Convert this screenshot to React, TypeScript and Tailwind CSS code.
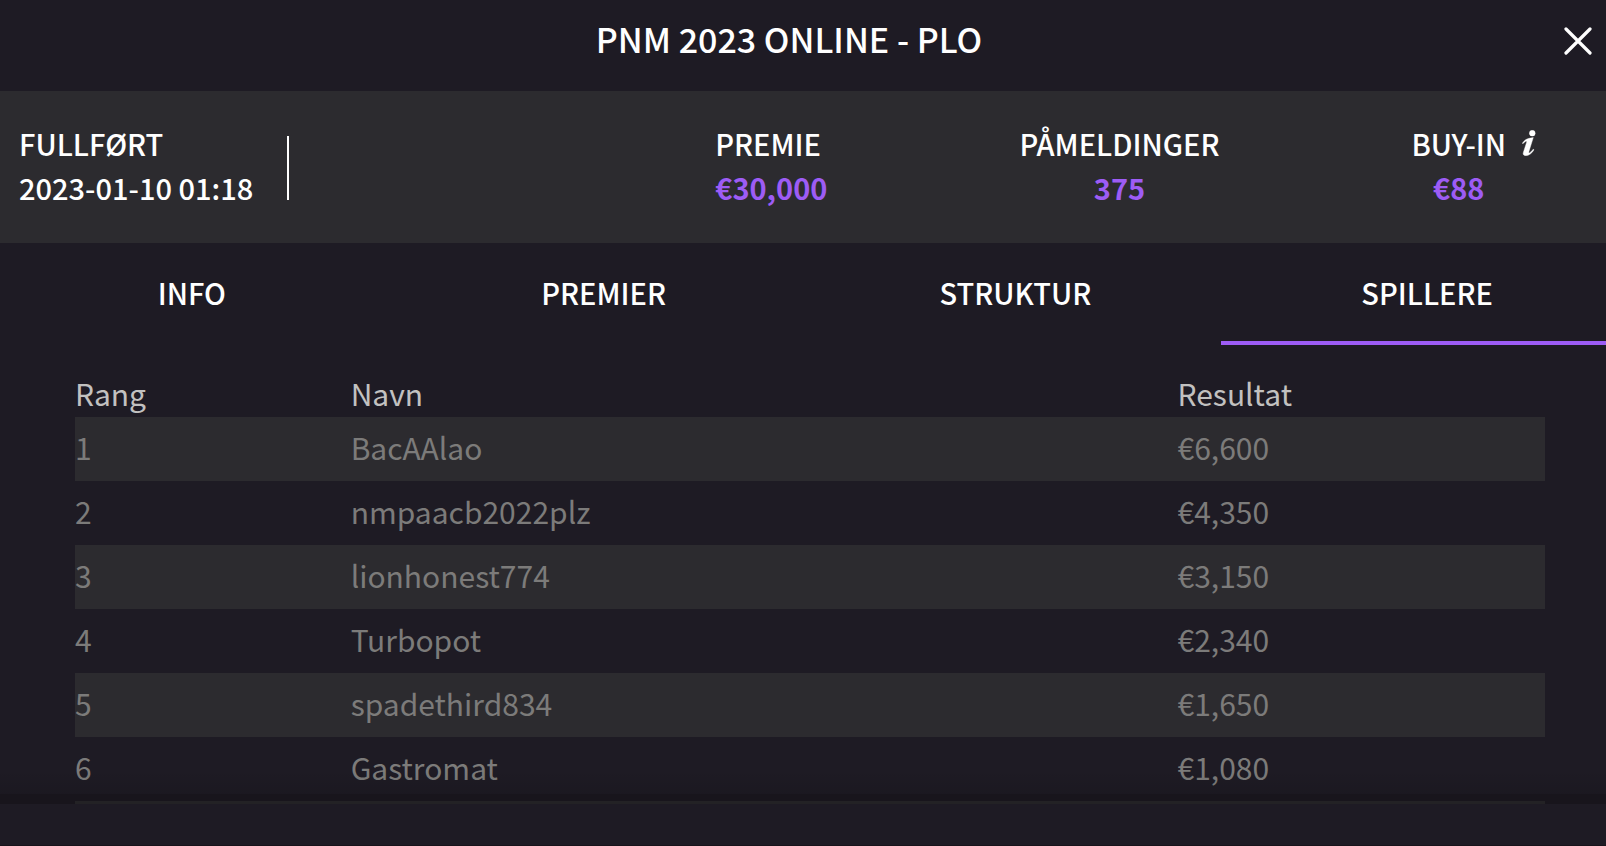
import { useState } from 'react';

const tabs = ['INFO', 'PREMIER', 'STRUKTUR', 'SPILLERE'];

const players = [
  { rank: 1, name: 'BacAAlao', result: '€6,600' },
  { rank: 2, name: 'nmpaacb2022plz', result: '€4,350' },
  { rank: 3, name: 'lionhonest774', result: '€3,150' },
  { rank: 4, name: 'Turbopot', result: '€2,340' },
  { rank: 5, name: 'spadethird834', result: '€1,650' },
  { rank: 6, name: 'Gastromat', result: '€1,080' },
];

function CloseIcon() {
  return (
    <svg width="28" height="28" viewBox="0 0 28 28" fill="none" stroke="currentColor" strokeWidth="3.2" strokeLinecap="round" aria-hidden="true">
      <path d="M2 2l24 24M26 2L2 26" />
    </svg>
  );
}

function InfoIcon() {
  return (
    <svg width="14" height="26" viewBox="0 0 14 26" fill="currentColor" stroke="currentColor" strokeWidth="0.4" aria-hidden="true">
      <circle cx="10.3" cy="3.2" r="2.9" />
      <path d="M11.3 7.6L7 21.2C6.6 22.6 6.8 23 7.3 22.9C8.4 22.6 9.9 20.9 11.2 19.2L12 19.8C9.8 23.4 7 25.7 3.8 25.7C1.6 25.7 0.7 24.4 1.4 22.2L4.5 12.7C4.9 11.2 4.6 11 3.9 11.3C3 11.7 1.9 12.6 0.9 13.8L0.3 13.2C2.2 10.6 4.5 8.8 7.1 8.3Z" />
    </svg>
  );
}

function Stat({ label, value, className }: { label: string; value: string; className: string }) {
  return (
    <div className={className}>
      <p>{label}</p>
      <p className="font-bold text-[#9d5cf5]">{value}</p>
    </div>
  );
}

export default function App() {
  const [active, setActive] = useState('SPILLERE');

  return (
    <div className="flex h-screen flex-col overflow-hidden bg-[#1e1b24] font-['Noto_Sans_CJK_SC',sans-serif] text-[29px] leading-[44px] font-medium text-white">
      <header className="flex h-[91px] shrink-0 items-center pb-[10px]">
        <h1 className="ml-[22px] flex-1 pb-1 text-center text-[34px] font-medium">PNM 2023 ONLINE - PLO</h1>
        <button type="button" aria-label="Lukk" className="flex h-12 w-[50px] items-center pl-2">
          <CloseIcon />
        </button>
      </header>

      <section className="flex shrink-0 items-center justify-between bg-[#2c2b2f] pt-[30px] pr-[70px] pb-[34px] pl-[19px]">
        <div className="flex items-end gap-[34px]">
          <div>
            <p>FULLFØRT</p>
            <p>2023-01-10 01:18</p>
          </div>
          <div className="mb-[9px] h-16 w-[2px] bg-white" />
        </div>
        <div className="flex gap-48">
          <Stat label="PREMIE" value="€30,000" className="text-left" />
          <Stat label="PÅMELDINGER" value="375" className="text-center" />
          <div className="flex items-start gap-4">
            <Stat label="BUY-IN" value="€88" className="text-center" />
            <button type="button" aria-label="Buy-in info" className="flex h-11 items-center">
              <InfoIcon />
            </button>
          </div>
        </div>
      </section>

      <nav className="-mr-[27px] -ml-[14px] grid shrink-0 grid-cols-4" role="tablist">
        {tabs.map((tab) => (
          <button
            key={tab}
            type="button"
            role="tab"
            aria-selected={tab === active}
            onClick={() => setActive(tab)}
            className={`border-b-4 pt-[27px] pb-[27px] ${tab === active ? 'border-[#9d5cf5]' : 'border-transparent'}`}
          >
            {tab}
          </button>
        ))}
      </nav>

      <main className="relative min-h-0 flex-1 overflow-hidden pt-6 pr-[61px] pl-[75px]">
        <table className="w-full table-fixed text-left text-[30px] font-normal text-[#7c7b7a]">
          <thead className="text-[#c2c1c0]">
            <tr className="h-12">
              <th className="w-3/16 p-0 font-normal">Rang</th>
              <th className="w-9/16 p-0 font-normal">Navn</th>
              <th className="w-4/16 p-0 font-normal">Resultat</th>
            </tr>
          </thead>
          <tbody>
            {players.map((player) => (
              <tr key={player.rank} className="h-16 odd:bg-[#2c2b2f]">
                <td className="p-0 pb-1">{player.rank}</td>
                <td className="p-0 pb-1">{player.name}</td>
                <td className="p-0 pb-1">{player.result}</td>
              </tr>
            ))}
            <tr className="h-16 odd:bg-[#2c2b2f]">
              <td colSpan={3} />
            </tr>
          </tbody>
        </table>
        <div className="pointer-events-none absolute inset-x-0 bottom-0">
          <div className="h-6 bg-linear-to-b from-transparent to-black/10" />
          <div className="h-[10px] bg-black/20" />
        </div>
      </main>

      <footer className="h-[42px] shrink-0 border-b border-[#18141b]" />
    </div>
  );
}
